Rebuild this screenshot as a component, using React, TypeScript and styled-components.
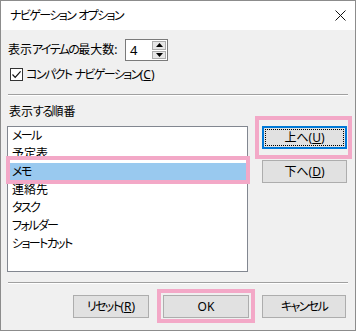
import React from "react";
import styled, { createGlobalStyle } from "styled-components";

const Global = createGlobalStyle`
  html, body { margin: 0; padding: 0; background: #ffffff; }
  body {
    font-family: "Noto Sans", "Noto Sans CJK JP", sans-serif;
    font-size: 12px;
    color: #000;
    font-feature-settings: "palt" 1;
  }
  * { box-sizing: border-box; }
`;

const Kana = styled.span`
  letter-spacing: -1.6px;
`;

const jp = (text: string): React.ReactNode[] =>
  text.split(/([\u3040-\u30FF]+)/).map((part, i) =>
    /^[\u3040-\u30FF]+$/.test(part) ? <Kana key={i}>{part}</Kana> : <React.Fragment key={i}>{part}</React.Fragment>
  );

const Window = styled.div`
  width: 356px;
  height: 331px;
  border: 1px solid #8c8c8c;
  display: flex;
  flex-direction: column;
  background: #f0f0f0;
`;

const TitleBar = styled.div`
  height: 29px;
  background: #ffffff;
  display: flex;
  align-items: center;
  padding-left: 9px;
  padding-right: 9px;
  flex-shrink: 0;
`;

const Title = styled.div`
  flex: 1;
  font-size: 12px;
  line-height: 16px;
`;

const Close = styled.div`
  width: 12px;
  height: 12px;
  display: flex;
  align-items: center;
  justify-content: center;
`;

const Body = styled.div`
  flex: 1;
  display: flex;
  flex-direction: column;
  padding: 0 7px 0 6px;
`;

const SpinRow = styled.div`
  margin-top: 9px;
  height: 22px;
  display: flex;
  align-items: center;
  padding-left: 1px;
`;

const Label = styled.div<{ $w?: number }>`
  width: ${(p) => (p.$w ? `${p.$w}px` : "auto")};
  line-height: 16px;
  white-space: nowrap;
`;

const Spin = styled.div`
  width: 43px;
  height: 22px;
  border: 1px solid #7a7a7a;
  background: #fff;
  display: flex;
`;

const SpinValue = styled.div`
  flex: 1;
  padding-left: 4px;
  font-size: 13px;
  line-height: 20px;
`;

const SpinButtons = styled.div`
  width: 15px;
  display: flex;
  flex-direction: column;
  gap: 1px;
  padding: 1px 1px 1px 0;
`;

const SpinBtn = styled.div`
  flex: 1;
  background: #e6e6e6;
  border: 1px solid #acacac;
  display: flex;
  align-items: center;
  justify-content: center;
`;

const CheckRow = styled.label`
  margin-top: 7px;
  height: 13px;
  display: flex;
  align-items: center;
  gap: 3px;
  padding-left: 3px;
`;

const Box = styled.span`
  width: 13px;
  height: 13px;
  border: 1px solid #333;
  background: #fff;
  display: flex;
  align-items: center;
  justify-content: center;
`;

const U = styled.span`
  text-decoration: underline;
  text-underline-offset: 1px;
`;

const Separator = styled.div<{ $mt: number }>`
  margin-top: ${(p) => p.$mt}px;
  height: 2px;
  border-top: 1px solid #a0a0a0;
  border-bottom: 1px solid #ffffff;
  margin-left: 1px;
`;

const SectionLabel = styled.div`
  margin-top: 8px;
  padding-left: 2px;
  line-height: 16px;
`;

const Main = styled.div`
  margin-top: 6px;
  display: flex;
  align-items: flex-start;
`;

const ListWrap = styled.div`
  position: relative;
`;

const List = styled.div`
  width: 241px;
  height: 146px;
  border: 1px solid #828790;
  background: #fff;
  padding: 0 1px 0 2px;
  display: flex;
  flex-direction: column;
`;

const Item = styled.div<{ $sel?: boolean }>`
  height: 18px;
  line-height: 18px;
  padding-left: 2px;
  background: ${(p) => (p.$sel ? "#99c9ef" : "transparent")};
  white-space: nowrap;
`;

const Mark = styled.div<{ $t: number; $l: number; $w: number; $h: number }>`
  position: absolute;
  top: ${(p) => p.$t}px;
  left: ${(p) => p.$l}px;
  width: ${(p) => p.$w}px;
  height: ${(p) => p.$h}px;
  border: 4px solid #f3a8c7;
  pointer-events: none;
`;

const Side = styled.div`
  margin-left: 14px;
  display: flex;
  flex-direction: column;
  gap: 11px;
`;

const BtnWrap = styled.div`
  position: relative;
`;

const Button = styled.button<{ $w: number; $focus?: boolean }>`
  width: ${(p) => p.$w}px;
  height: 23px;
  margin: 0;
  padding: 0;
  font-family: inherit;
  font-size: 12px;
  font-feature-settings: "palt" 1;
  color: #000;
  background: #e1e1e1;
  border: ${(p) => (p.$focus ? "2px solid #0078d7" : "1px solid #adadad")};
  position: relative;
  display: flex;
  align-items: center;
  justify-content: center;
  line-height: 16px;
  &::after {
    content: "";
    display: ${(p) => (p.$focus ? "block" : "none")};
    position: absolute;
    inset: 1px;
    border: 1px dotted #000;
  }
`;

const Bottom = styled.div`
  margin-top: 11px;
  display: flex;
  justify-content: flex-end;
  padding-right: 2px;
`;

const BottomSlot = styled.div<{ $ml: number }>`
  margin-left: ${(p) => p.$ml}px;
  position: relative;
`;

const items = ["メール", "予定表", "メモ", "連絡先", "タスク", "フォルダー", "ショートカット"];

export default function App() {
  return (
    <>
      <Global />
      <Window>
        <TitleBar>
          <Title>{jp("ナビゲーション オプション")}</Title>
          <Close>
            <svg width="11" height="11" viewBox="0 0 11 11">
              <path d="M0.5 0.5 L10.5 10.5 M10.5 0.5 L0.5 10.5" stroke="#111" strokeWidth="1" />
            </svg>
          </Close>
        </TitleBar>
        <Body>
          <SpinRow>
            <Label $w={117}>{jp("表示アイテムの最大数:")}</Label>
            <Spin>
              <SpinValue>4</SpinValue>
              <SpinButtons>
                <SpinBtn>
                  <svg width="7" height="4" viewBox="0 0 7 4">
                    <path d="M0 4 L3.5 0 L7 4 Z" fill="#000" />
                  </svg>
                </SpinBtn>
                <SpinBtn>
                  <svg width="7" height="4" viewBox="0 0 7 4">
                    <path d="M0 0 L3.5 4 L7 0 Z" fill="#000" />
                  </svg>
                </SpinBtn>
              </SpinButtons>
            </Spin>
          </SpinRow>
          <CheckRow>
            <Box>
              <svg width="11" height="11" viewBox="0 0 11 11">
                <path d="M1.5 5.5 L4.2 8.3 L9.6 2.4" stroke="#111" strokeWidth="1.2" fill="none" />
              </svg>
            </Box>
            <Label>
              {jp("コンパクト ナビゲーション")}(<U>C</U>)
            </Label>
          </CheckRow>
          <Separator $mt={13} />
          <SectionLabel>{jp("表示する順番")}</SectionLabel>
          <Main>
            <ListWrap>
              <List>
                {items.map((t, i) => (
                  <Item key={t} $sel={i === 2}>
                    {jp(t)}
                  </Item>
                ))}
              </List>
              <Mark $t={30} $l={-1} $w={244} $h={28} />
            </ListWrap>
            <Side>
              <BtnWrap>
                <Button $w={85} $focus>
                  上へ(<U>U</U>)
                </Button>
                <Mark $t={-10} $l={-7} $w={97} $h={43} />
              </BtnWrap>
              <Button $w={85}>
                下へ(<U>D</U>)
              </Button>
            </Side>
          </Main>
          <Separator $mt={10} />
          <Bottom>
            <BottomSlot $ml={0}>
              <Button $w={76}>
                {jp("リセット")}(<U>R</U>)
              </Button>
            </BottomSlot>
            <BottomSlot $ml={14}>
              <Button $w={86}>OK</Button>
              <Mark $t={-6} $l={-6} $w={98} $h={34} />
            </BottomSlot>
            <BottomSlot $ml={13}>
              <Button $w={84}>{jp("キャンセル")}</Button>
            </BottomSlot>
          </Bottom>
        </Body>
      </Window>
    </>
  );
}
